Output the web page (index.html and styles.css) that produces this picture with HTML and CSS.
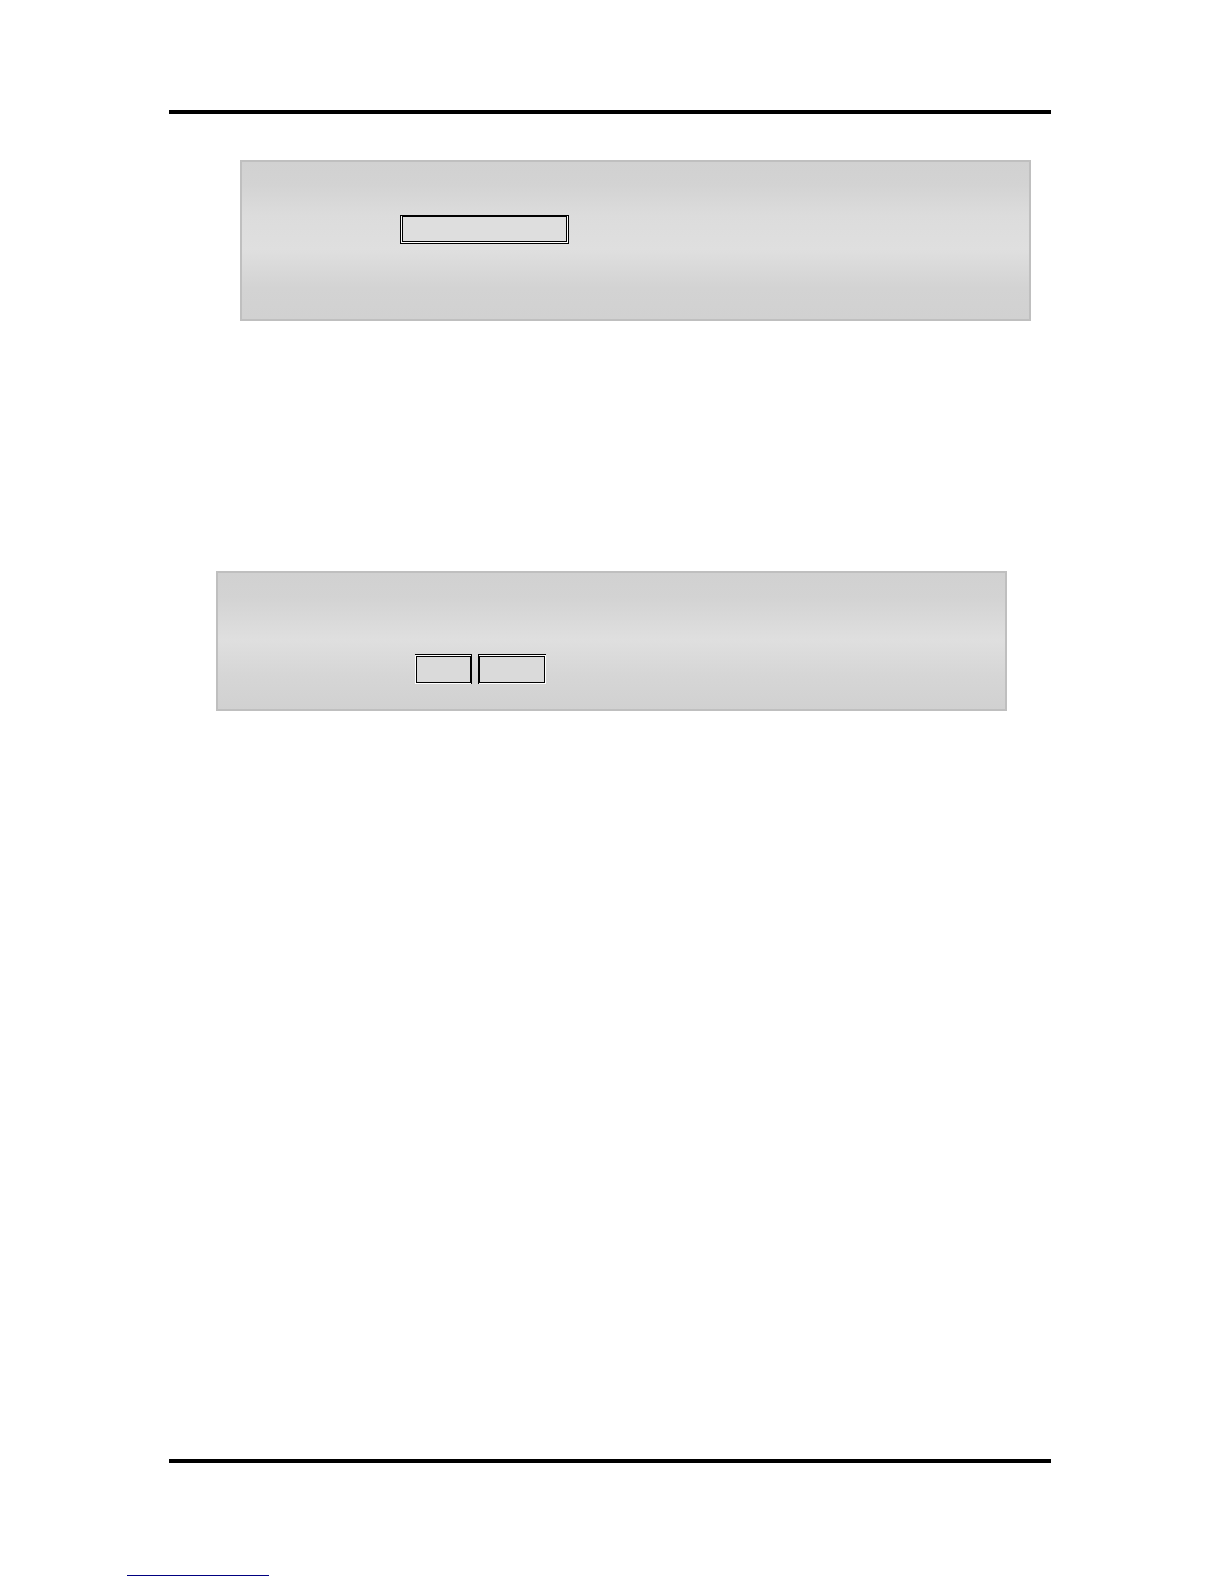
FILE: index.html
```
<!DOCTYPE html>
<html lang="en">

<head>
  <meta charset="UTF-8">
  <meta name="viewport" content="width=device-width, initial-scale=1.0">
  <link rel="stylesheet" href="styles.css">
  <title>Page</title>
</head>

<body>
  <main>
    <hr class="rule">
    <section class="panel panel-top">
      <div class="field field-wide"><div class="inner"></div></div>
    </section>
    <section class="panel panel-bottom">
      <div class="field field-left"><div class="inner"></div></div>
      <div class="field field-right"><div class="inner"></div></div>
    </section>
    <hr class="rule rule-end">
  </main>
  <footer>
    <a class="link" href="#"></a>
  </footer>
</body>

</html>
```

FILE: styles.css
```
* {
  box-sizing: border-box;
}

body {
  margin: 0;
  min-height: 100vh;
  display: flex;
  flex-direction: column;
  background-color: #fff;
  font-family: "Liberation Sans", Arial, sans-serif;
}

main {
  flex: 1;
  display: flex;
  flex-direction: column;
  padding: 110px 173px 0 169px;
}

.rule {
  width: 100%;
  height: 4px;
  margin: 0;
  border: 0;
  background-color: #000;
}

.rule-end {
  margin-top: auto;
}

.panel {
  display: flex;
  border: 2px solid #bfbfbf;
}

.panel-top {
  margin: 46px 20px 0 71px;
  padding: 53px 0 75px 158px;
  background: linear-gradient(#d1d1d1, #d3d3d3 14%, #dcdcdc 34%, #dfdfdf 56%, #d3d3d3 80%, #d1d1d1);
}

.panel-bottom {
  gap: 6px;
  margin: 250px 44px 0 47px;
  padding: 81px 0 25px 197px;
  background: linear-gradient(#d1d1d1, #d3d3d3 18%, #dfdfdf 49%, #d6d6d6 75%, #d1d1d1);
}

/* double frames, white between the two lines */
.field {
  display: flex;
  height: 30px;
  border: 0 solid #000;
  background-color: #fff;
}

.inner {
  flex: 1;
  border: 1px solid #000;
  background-color: #dadada;
}

.field-wide {
  width: 169px;
  height: 29px;
  border-width: 1px;
  padding: 0 1px 1px;
}

.field-wide .inner {
  background-color: #dedede;
}

.field-left {
  width: 57px;
  border-width: 1px 1px 0 0;
  padding: 1px 0 1px 1px;
}

.field-right {
  width: 68px;
  border-width: 1px 0 0 1px;
  padding: 1px 1px 1px 0;
}

footer {
  padding: 112px 127px 8px;
}

.link {
  display: block;
  width: 142px;
  border-bottom: 1px solid #000080;
}
```
